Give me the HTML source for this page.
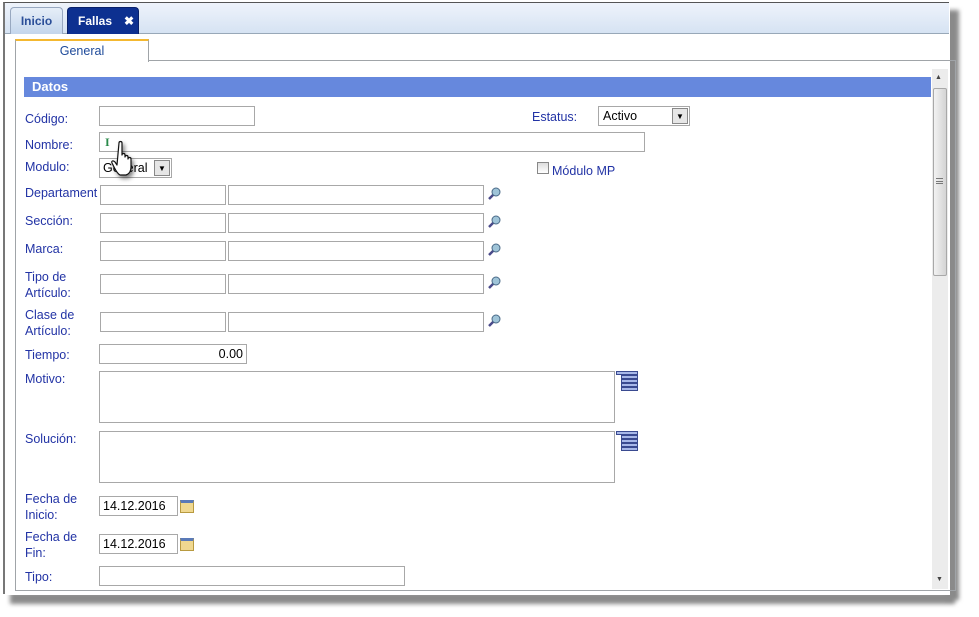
<!DOCTYPE html>
<html><head><meta charset="utf-8"><style>
*{margin:0;padding:0;box-sizing:border-box}
body{width:979px;height:617px;background:#fff;position:relative;overflow:hidden;font-family:"Liberation Sans",Tahoma,sans-serif;font-size:12px}
.a{position:absolute}
.l{position:absolute;color:#2233a5;font-size:12.5px;line-height:16px}
.i{position:absolute;border:1px solid #a8a8a8;background:#fff;height:20px}
.lp{position:absolute;width:14px;height:14px}
.ta{position:absolute;border:1px solid #a8a8a8;background:#fff}
.ic{position:absolute;width:22px;height:22px}
.cal{position:absolute;width:14px;height:13px;background:#f0d890;border:1px solid #b89a40;border-top:3px solid #5a7ab8}
</style></head><body>
<div class="a" style="left:945px;top:10px;width:14px;height:590px;background:#8a8a8a;filter:blur(2px)"></div>
<div class="a" style="left:10px;top:592px;width:945px;height:12px;background:#8a8a8a;filter:blur(2px)"></div>
<div class="a" style="left:0;top:0;width:950px;height:595px;background:#fff"></div>
<div class="a" style="left:3px;top:2px;width:946px;height:592px;border-left:2px solid #777;border-top:1px solid #555"></div>
<div class="a" style="left:5px;top:3px;width:944px;height:31px;background:linear-gradient(#eef3fb,#d6e3f3);border-bottom:1px solid #98a8b8"></div>
<div class="a" style="left:10px;top:7px;width:53px;height:27px;background:linear-gradient(#e6eef8,#c4d6ec);border:1px solid #98a8c0;border-bottom:none;border-radius:4px 4px 0 0;color:#2a4e98;font-weight:bold;font-size:12px;line-height:26px;text-align:center">Inicio</div>
<div class="a" style="left:67px;top:7px;width:72px;height:27px;background:#0d3090;border:1px solid #08206a;border-bottom:none;border-radius:4px 4px 0 0;color:#fff;font-weight:bold;font-size:12px;line-height:26px;padding-left:10px">Fallas<span style="position:absolute;left:56px;top:0">✖</span></div>
<div class="a" style="left:15px;top:60px;width:941px;height:531px;border:1px solid #a0a4a8"></div>
<div class="a" style="left:15px;top:39px;width:134px;height:23px;background:#fff;border:1px solid #a0a4a8;border-top:2px solid #f4b830;border-bottom:none;color:#1e4a9a;text-align:center;line-height:20px;font-size:12.5px">General</div>
<div class="a" style="left:24px;top:77px;width:907px;height:20px;background:#6688dd;color:#fff;font-weight:bold;font-size:13px;line-height:20px;padding-left:8px">Datos</div>
<div class="a" style="left:932px;top:69px;width:16px;height:520px;background:#ececec"></div>
<div class="a" style="left:935px;top:74px;font-size:7px;color:#444">▲</div>
<div class="a" style="left:933px;top:88px;width:14px;height:188px;background:linear-gradient(90deg,#f2f2f2,#d4d4d4);border:1px solid #a8a8a8;border-radius:2px"></div>
<div class="a" style="left:936px;top:178px;width:7px;height:6px;border-top:1px solid #777;border-bottom:1px solid #777"></div>
<div class="a" style="left:936px;top:181px;width:7px;height:1px;background:#777"></div>
<div class="a" style="left:936px;top:576px;font-size:7px;color:#444">▼</div>

<div class="l" style="left:25px;top:111px">Código:</div><div class="i" style="left:99px;top:106px;width:156px"></div>
<div class="l" style="left:532px;top:109px">Estatus:</div>
<div class="i" style="left:598px;top:106px;width:92px;padding-left:4px;line-height:18px;font-size:12.5px">Activo<span class="a" style="right:1px;top:1px;width:16px;height:16px;background:#e6e6e6;border:1px solid #888;font-size:8px;text-align:center;line-height:15px">▼</span></div>
<div class="l" style="left:25px;top:137px">Nombre:</div><div class="i" style="left:99px;top:132px;width:546px"><span class="a" style="left:5px;top:2px;color:#2a8a4a;font-family:'Liberation Serif';font-weight:bold">I</span></div>
<div class="l" style="left:25px;top:159px">Modulo:</div>
<div class="i" style="left:99px;top:158px;width:73px;padding-left:3px;line-height:18px;font-size:12.5px">General<span class="a" style="right:1px;top:1px;width:16px;height:16px;background:#e6e6e6;border:1px solid #888;font-size:8px;text-align:center;line-height:15px">▼</span></div>
<svg class="a" style="left:110px;top:140px;filter:drop-shadow(2px 3px 2px rgba(0,0,0,.5))" width="30" height="36" viewBox="0 0 30 36"><path d="M9 3c0-2 3-2 3 0v12c0-2 3-2 3 0v2c0-2 3-2 3 0v2c0-2 3-2 3 0v8c0 4-2 7-5 8h-6c-2-1-4-4-6-8l-2-4c-1-2 1-3 3-1l2 3z" fill="#fff" stroke="#111" stroke-width="1.2" stroke-linejoin="round"/></svg>
<div class="a" style="left:537px;top:162px;width:12px;height:12px;border:1px solid #888;background:linear-gradient(#ddd,#fff)"></div>
<div class="l" style="left:552px;top:163px">Módulo MP</div>

<div class="l" style="left:25px;top:185px">Departament</div>
<div class="i" style="left:100px;top:185px;width:126px"></div><div class="i" style="left:228px;top:185px;width:256px"></div>
<div class="l" style="left:25px;top:213px">Sección:</div>
<div class="i" style="left:100px;top:213px;width:126px"></div><div class="i" style="left:228px;top:213px;width:256px"></div>
<div class="l" style="left:25px;top:241px">Marca:</div>
<div class="i" style="left:100px;top:241px;width:126px"></div><div class="i" style="left:228px;top:241px;width:256px"></div>
<div class="l" style="left:25px;top:269px">Tipo de<br>Artículo:</div>
<div class="i" style="left:100px;top:274px;width:126px"></div><div class="i" style="left:228px;top:274px;width:256px"></div>
<div class="l" style="left:25px;top:307px">Clase de<br>Artículo:</div>
<div class="i" style="left:100px;top:312px;width:126px"></div><div class="i" style="left:228px;top:312px;width:256px"></div>

<svg class="lp" style="left:487px;top:187px" viewBox="0 0 14 14"><line x1="2" y1="12" x2="7" y2="7" stroke="#4a4a8a" stroke-width="2.5"/><circle cx="9" cy="5" r="4" fill="#9fc4d8" stroke="#4a6a88"/></svg>
<svg class="lp" style="left:487px;top:215px" viewBox="0 0 14 14"><line x1="2" y1="12" x2="7" y2="7" stroke="#4a4a8a" stroke-width="2.5"/><circle cx="9" cy="5" r="4" fill="#9fc4d8" stroke="#4a6a88"/></svg>
<svg class="lp" style="left:487px;top:243px" viewBox="0 0 14 14"><line x1="2" y1="12" x2="7" y2="7" stroke="#4a4a8a" stroke-width="2.5"/><circle cx="9" cy="5" r="4" fill="#9fc4d8" stroke="#4a6a88"/></svg>
<svg class="lp" style="left:487px;top:276px" viewBox="0 0 14 14"><line x1="2" y1="12" x2="7" y2="7" stroke="#4a4a8a" stroke-width="2.5"/><circle cx="9" cy="5" r="4" fill="#9fc4d8" stroke="#4a6a88"/></svg>
<svg class="lp" style="left:487px;top:314px" viewBox="0 0 14 14"><line x1="2" y1="12" x2="7" y2="7" stroke="#4a4a8a" stroke-width="2.5"/><circle cx="9" cy="5" r="4" fill="#9fc4d8" stroke="#4a6a88"/></svg>

<div class="l" style="left:25px;top:347px">Tiempo:</div>
<div class="i" style="left:99px;top:344px;width:148px;text-align:right;padding-right:3px;line-height:18px;font-size:12.5px">0.00</div>

<div class="l" style="left:25px;top:371px">Motivo:</div>
<div class="ta" style="left:99px;top:371px;width:516px;height:52px"></div>
<svg class="ic" style="left:616px;top:371px" viewBox="0 0 22 22"><g fill="#a8b8e8" stroke="#3a4a90" stroke-width="1"><rect x="0.5" y="0.5" width="21" height="3"/><rect x="5.5" y="4.5" width="16" height="3"/><rect x="5.5" y="8.5" width="16" height="3"/><rect x="5.5" y="12.5" width="16" height="3"/><rect x="5.5" y="16.5" width="16" height="3"/></g></svg>
<div class="l" style="left:25px;top:431px">Solución:</div>
<div class="ta" style="left:99px;top:431px;width:516px;height:52px"></div>
<svg class="ic" style="left:616px;top:431px" viewBox="0 0 22 22"><g fill="#a8b8e8" stroke="#3a4a90" stroke-width="1"><rect x="0.5" y="0.5" width="21" height="3"/><rect x="5.5" y="4.5" width="16" height="3"/><rect x="5.5" y="8.5" width="16" height="3"/><rect x="5.5" y="12.5" width="16" height="3"/><rect x="5.5" y="16.5" width="16" height="3"/></g></svg>

<div class="l" style="left:25px;top:491px">Fecha de<br>Inicio:</div>
<div class="i" style="left:99px;top:496px;width:79px;padding-left:3px;line-height:18px;font-size:12.5px">14.12.2016</div>
<div class="cal" style="left:180px;top:500px"></div>
<div class="l" style="left:25px;top:529px">Fecha de<br>Fin:</div>
<div class="i" style="left:99px;top:534px;width:79px;padding-left:3px;line-height:18px;font-size:12.5px">14.12.2016</div>
<div class="cal" style="left:180px;top:538px"></div>
<div class="l" style="left:25px;top:569px">Tipo:</div>
<div class="i" style="left:99px;top:566px;width:306px"></div>
</body></html>
